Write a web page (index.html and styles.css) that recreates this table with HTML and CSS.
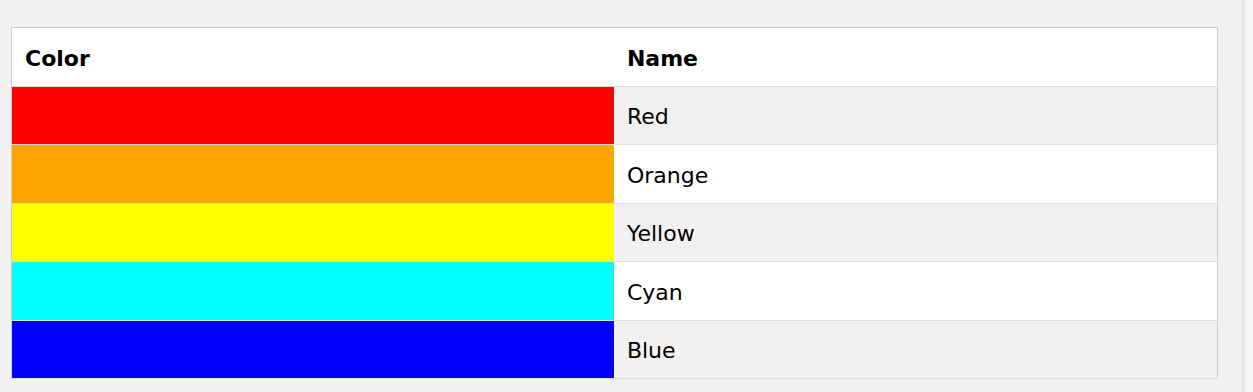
FILE: index.html
```html
<!DOCTYPE html>
<html lang="en">
<head>
<meta charset="utf-8">
<title>Colors</title>
<link rel="stylesheet" href="styles.css">
</head>
<body>
<div class="page">
  <main class="content">
    <table class="color-table">
      <colgroup>
        <col class="col-color">
        <col class="col-name">
      </colgroup>
      <thead>
        <tr class="head-row">
          <th>Color</th>
          <th>Name</th>
        </tr>
      </thead>
      <tbody>
        <tr class="row-shaded">
          <td class="swatch swatch-red"></td>
          <td>Red</td>
        </tr>
        <tr class="row-plain">
          <td class="swatch swatch-orange"></td>
          <td>Orange</td>
        </tr>
        <tr class="row-shaded">
          <td class="swatch swatch-yellow"></td>
          <td>Yellow</td>
        </tr>
        <tr class="row-plain">
          <td class="swatch swatch-cyan"></td>
          <td>Cyan</td>
        </tr>
        <tr class="row-shaded">
          <td class="swatch swatch-blue"></td>
          <td>Blue</td>
        </tr>
      </tbody>
    </table>
  </main>
  <div class="edge"></div>
</div>
</body>
</html>
```
FILE: styles.css
```css
html, body {
  margin: 0;
  padding: 0;
  height: 100%;
}

body {
  background: #f1f1f1;
  font-family: "DejaVu Sans", Verdana, sans-serif;
  font-size: 22px;
  line-height: 33.75px;
  color: #000;
  overflow: hidden;
}

.page {
  display: flex;
  height: 100%;
}

.content {
  flex: 1;
  padding: 27px 24px 0 11px;
}

.edge {
  width: 11px;
  background: linear-gradient(to right, #dedede 0, #e9e9e9 2px, #f6f6f6 4px, #fafafa 100%);
}

.color-table {
  width: 100%;
  border-collapse: collapse;
  border-spacing: 0;
  border: 1px solid #ccc;
  table-layout: fixed;
}

.col-color {
  width: 49.95%;
}

.color-table tr {
  border-bottom: 1px solid #ddd;
}

.color-table th,
.color-table td {
  padding: 13.5px 13px 10.25px;
  text-align: left;
  vertical-align: top;
  height: 33.75px;
}

.color-table th {
  font-weight: bold;
}

.head-row,
.row-plain {
  background: #fff;
}

.row-shaded {
  background: #f1f1f1;
}

.swatch-red { background: #ff0000; }
.swatch-orange { background: #ffa500; }
.swatch-yellow { background: #ffff00; }
.swatch-cyan { background: #00ffff; }
.swatch-blue { background: #0000ff; }
```
